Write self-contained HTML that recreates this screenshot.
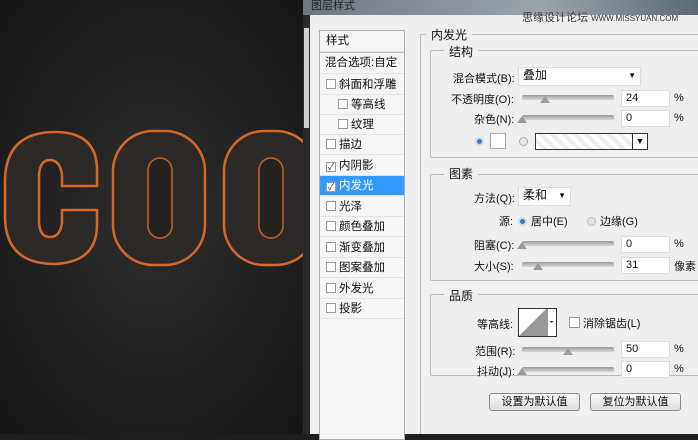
<!DOCTYPE html>
<html><head><meta charset="utf-8"><style>
*{margin:0;padding:0;box-sizing:border-box}
body{width:698px;height:434px;overflow:hidden;position:relative;background:#1e1e1e;font-family:"Liberation Sans","Noto Sans CJK SC",sans-serif;font-size:12px;color:#111}
.a{position:absolute}
.dlg{left:310px;top:0;width:388px;height:434px;background:#efefef}
.title{left:303px;top:0;width:395px;height:15px;background:linear-gradient(90deg,#6f7880,#9aa4ac 60%,#5d6a74);color:#222;font-size:11px;padding-left:8px;line-height:12px}
.list{left:319px;top:30px;width:86px;height:410px;background:#f6f6f6;border:1px solid #aaa;font-size:11.5px}
.row{position:absolute;left:0;width:84px;height:20px;line-height:20px;padding-left:6px;border-bottom:1px solid #e2e2e2}
.cb{display:inline-block;width:10px;height:10px;border:1px solid #999;background:#fff;vertical-align:-1px;margin-right:3px;font-size:9px;line-height:8px;text-align:center;color:#333}
.grp{border:1px solid #bbb;border-radius:2px}
.lbl{position:absolute;background:#efefef;padding:0 5px;font-size:12px}
.inp{position:absolute;background:#fff;border:1px solid #ddd;height:17px;font-size:11px;line-height:15px;padding-left:4px}
.sl{position:absolute;height:5px;background:linear-gradient(#9a9a9a,#d8d8d8);border-radius:2px}
.th{position:absolute;width:0;height:0;border-left:5px solid transparent;border-right:5px solid transparent;border-bottom:7px solid #999}
.t{position:absolute;font-size:11px;white-space:nowrap}
.btn{position:absolute;height:18px;border:1px solid #888;border-radius:3px;background:linear-gradient(#f8f8f8,#ddd);text-align:center;font-size:11px;line-height:16px}
</style></head><body>
<svg class="a" style="left:0;top:0" width="305" height="434">
<defs><radialGradient id="bg" cx="50%" cy="50%" r="70%"><stop offset="0" stop-color="#2e2e2e"/><stop offset="1" stop-color="#161616"/></radialGradient></defs>
<rect width="305" height="434" fill="url(#bg)"/>
<g fill="#2c2a28" stroke="#d8682a" stroke-width="2.5">
<path d="M55 132 Q6 132 5 180 L5 218 Q6 264 55 264 Q97 262 97 225 L97 210 L62 210 L62 223 Q60 237 50 237 Q40 237 39 223 L39 175 Q40 160 50 160 Q60 160 62 175 L62 186 L97 186 L97 170 Q97 132 55 132 Z"/>
<rect x="113" y="131" width="92" height="134" rx="40"/>
<rect x="224" y="131" width="92" height="134" rx="40"/>
</g>
<g fill="#242322" stroke="#c8602a" stroke-width="1.5">
<rect x="148" y="158" width="24" height="80" rx="12"/>
<rect x="259" y="158" width="24" height="80" rx="12"/>
</g>
</svg>
<div class="a" style="left:303px;top:0;width:7px;height:434px;background:#2a2a2a"></div>
<div class="a" style="left:304px;top:28px;width:5px;height:100px;background:#cfcfcf"></div>
<div class="a dlg"></div>
<div class="a title">图层样式</div>
<div class="a" style="left:522px;top:9px;font-size:11px;color:#333">思缘设计论坛 <span style="font-size:8px">WWW.MISSYUAN.COM</span></div>
<div class="a list">
<div class="row" style="top:0;height:21px">样式</div>
<div class="row" style="top:21px;height:22px;border-top:1px solid #bbb;padding-left:5px">混合选项:自定</div>
<div class="row" style="top:44px"><span class="cb"></span>斜面和浮雕</div>
<div class="row" style="top:64px;padding-left:18px"><span class="cb"></span>等高线</div>
<div class="row" style="top:84px;padding-left:18px"><span class="cb"></span>纹理</div>
<div class="row" style="top:104px"><span class="cb"></span>描边</div>
<div class="row" style="top:125px"><span class="cb">✓</span>内阴影</div>
<div class="row" style="top:145px;background:#3399ff;color:#fff"><span class="cb">✓</span>内发光</div>
<div class="row" style="top:166px"><span class="cb"></span>光泽</div>
<div class="row" style="top:186px"><span class="cb"></span>颜色叠加</div>
<div class="row" style="top:207px"><span class="cb"></span>渐变叠加</div>
<div class="row" style="top:227px"><span class="cb"></span>图案叠加</div>
<div class="row" style="top:248px"><span class="cb"></span>外发光</div>
<div class="row" style="top:268px"><span class="cb"></span>投影</div>
</div>
<div class="a" style="left:420px;top:34px;width:1px;height:400px;background:#bbb"></div>
<div class="a" style="left:420px;top:34px;width:280px;height:1px;background:#bbb"></div>
<div class="lbl" style="left:426px;top:26px">内发光</div>
<div class="a grp" style="left:430px;top:50px;width:272px;height:108px"></div>
<div class="lbl" style="left:444px;top:43px">结构</div>
<div class="t" style="left:453px;top:70px">混合模式(B):</div>
<div class="inp" style="left:518px;top:67px;width:123px;height:19px;font-size:12px">叠加<span style="position:absolute;right:4px;font-size:8px">▼</span></div>
<div class="t" style="left:451px;top:91px">不透明度(O):</div>
<div class="sl" style="left:522px;top:95px;width:92px"></div><div class="th" style="left:540px;top:96px"></div>
<div class="inp" style="left:621px;top:90px;width:49px">24</div><div class="t" style="left:674px;top:92px">%</div>
<div class="t" style="left:474px;top:111px">杂色(N):</div>
<div class="sl" style="left:522px;top:115px;width:92px"></div><div class="th" style="left:517px;top:116px"></div>
<div class="inp" style="left:621px;top:110px;width:49px">0</div><div class="t" style="left:674px;top:112px">%</div>
<div class="a" style="left:475px;top:137px;width:9px;height:9px;border-radius:50%;background:#3a78b8;border:2px solid #cde"></div>
<div class="a" style="left:490px;top:133px;width:16px;height:16px;background:#fff;border:1px solid #aaa"></div>
<div class="a" style="left:519px;top:137px;width:9px;height:9px;border-radius:50%;background:#e8e8e8;border:1px solid #aaa"></div>
<div class="a" style="left:535px;top:133px;width:113px;height:17px;border:1px solid #333;background:repeating-linear-gradient(45deg,#fff 0 4px,#eee 4px 8px)"></div>
<div class="a" style="left:632px;top:134px;width:15px;height:15px;background:#fff;border-left:1px solid #333;font-size:9px;text-align:center;line-height:15px">▼</div>
<div class="a grp" style="left:430px;top:174px;width:272px;height:107px"></div>
<div class="lbl" style="left:444px;top:165px">图素</div>
<div class="t" style="left:474px;top:190px">方法(Q):</div>
<div class="inp" style="left:518px;top:187px;width:53px;height:19px;font-size:12px">柔和<span style="position:absolute;right:4px;font-size:8px">▼</span></div>
<div class="t" style="left:499px;top:213px">源:</div>
<div class="a" style="left:518px;top:217px;width:9px;height:9px;border-radius:50%;background:#3a78b8;border:2px solid #cde"></div>
<div class="t" style="left:531px;top:213px">居中(E)</div>
<div class="a" style="left:587px;top:217px;width:9px;height:9px;border-radius:50%;background:#e4e4e4;border:1px solid #bbb"></div>
<div class="t" style="left:600px;top:213px">边缘(G)</div>
<div class="t" style="left:474px;top:237px">阻塞(C):</div>
<div class="sl" style="left:522px;top:241px;width:92px"></div><div class="th" style="left:517px;top:242px"></div>
<div class="inp" style="left:621px;top:236px;width:49px">0</div><div class="t" style="left:674px;top:238px">%</div>
<div class="t" style="left:474px;top:258px">大小(S):</div>
<div class="sl" style="left:522px;top:262px;width:92px"></div><div class="th" style="left:533px;top:263px"></div>
<div class="inp" style="left:621px;top:257px;width:49px">31</div><div class="t" style="left:674px;top:258px">像素</div>
<div class="a grp" style="left:430px;top:294px;width:272px;height:82px"></div>
<div class="lbl" style="left:444px;top:287px">品质</div>
<div class="t" style="left:477px;top:316px">等高线:</div>
<svg class="a" style="left:518px;top:308px" width="39" height="29"><rect x="0.5" y="0.5" width="38" height="28" fill="#fff" stroke="#333"/><path d="M1 28 L28 1 L28 28 Z" fill="#999"/><line x1="29" y1="0" x2="29" y2="29" stroke="#333"/><path d="M31.5 13 l4 0 l-2 2z" fill="#333"/></svg>
<div class="a" style="left:569px;top:317px;width:11px;height:11px;border:1px solid #999;background:#fff"></div>
<div class="t" style="left:583px;top:315px">消除锯齿(L)</div>
<div class="t" style="left:475px;top:343px">范围(R):</div>
<div class="sl" style="left:522px;top:347px;width:92px"></div><div class="th" style="left:563px;top:348px"></div>
<div class="inp" style="left:621px;top:341px;width:49px">50</div><div class="t" style="left:674px;top:343px">%</div>
<div class="t" style="left:477px;top:363px">抖动(J):</div>
<div class="sl" style="left:522px;top:367px;width:92px"></div><div class="th" style="left:517px;top:368px"></div>
<div class="inp" style="left:621px;top:361px;width:49px">0</div><div class="t" style="left:674px;top:363px">%</div>
<div class="btn" style="left:489px;top:393px;width:91px">设置为默认值</div>
<div class="btn" style="left:590px;top:393px;width:91px">复位为默认值</div>
</body></html>
